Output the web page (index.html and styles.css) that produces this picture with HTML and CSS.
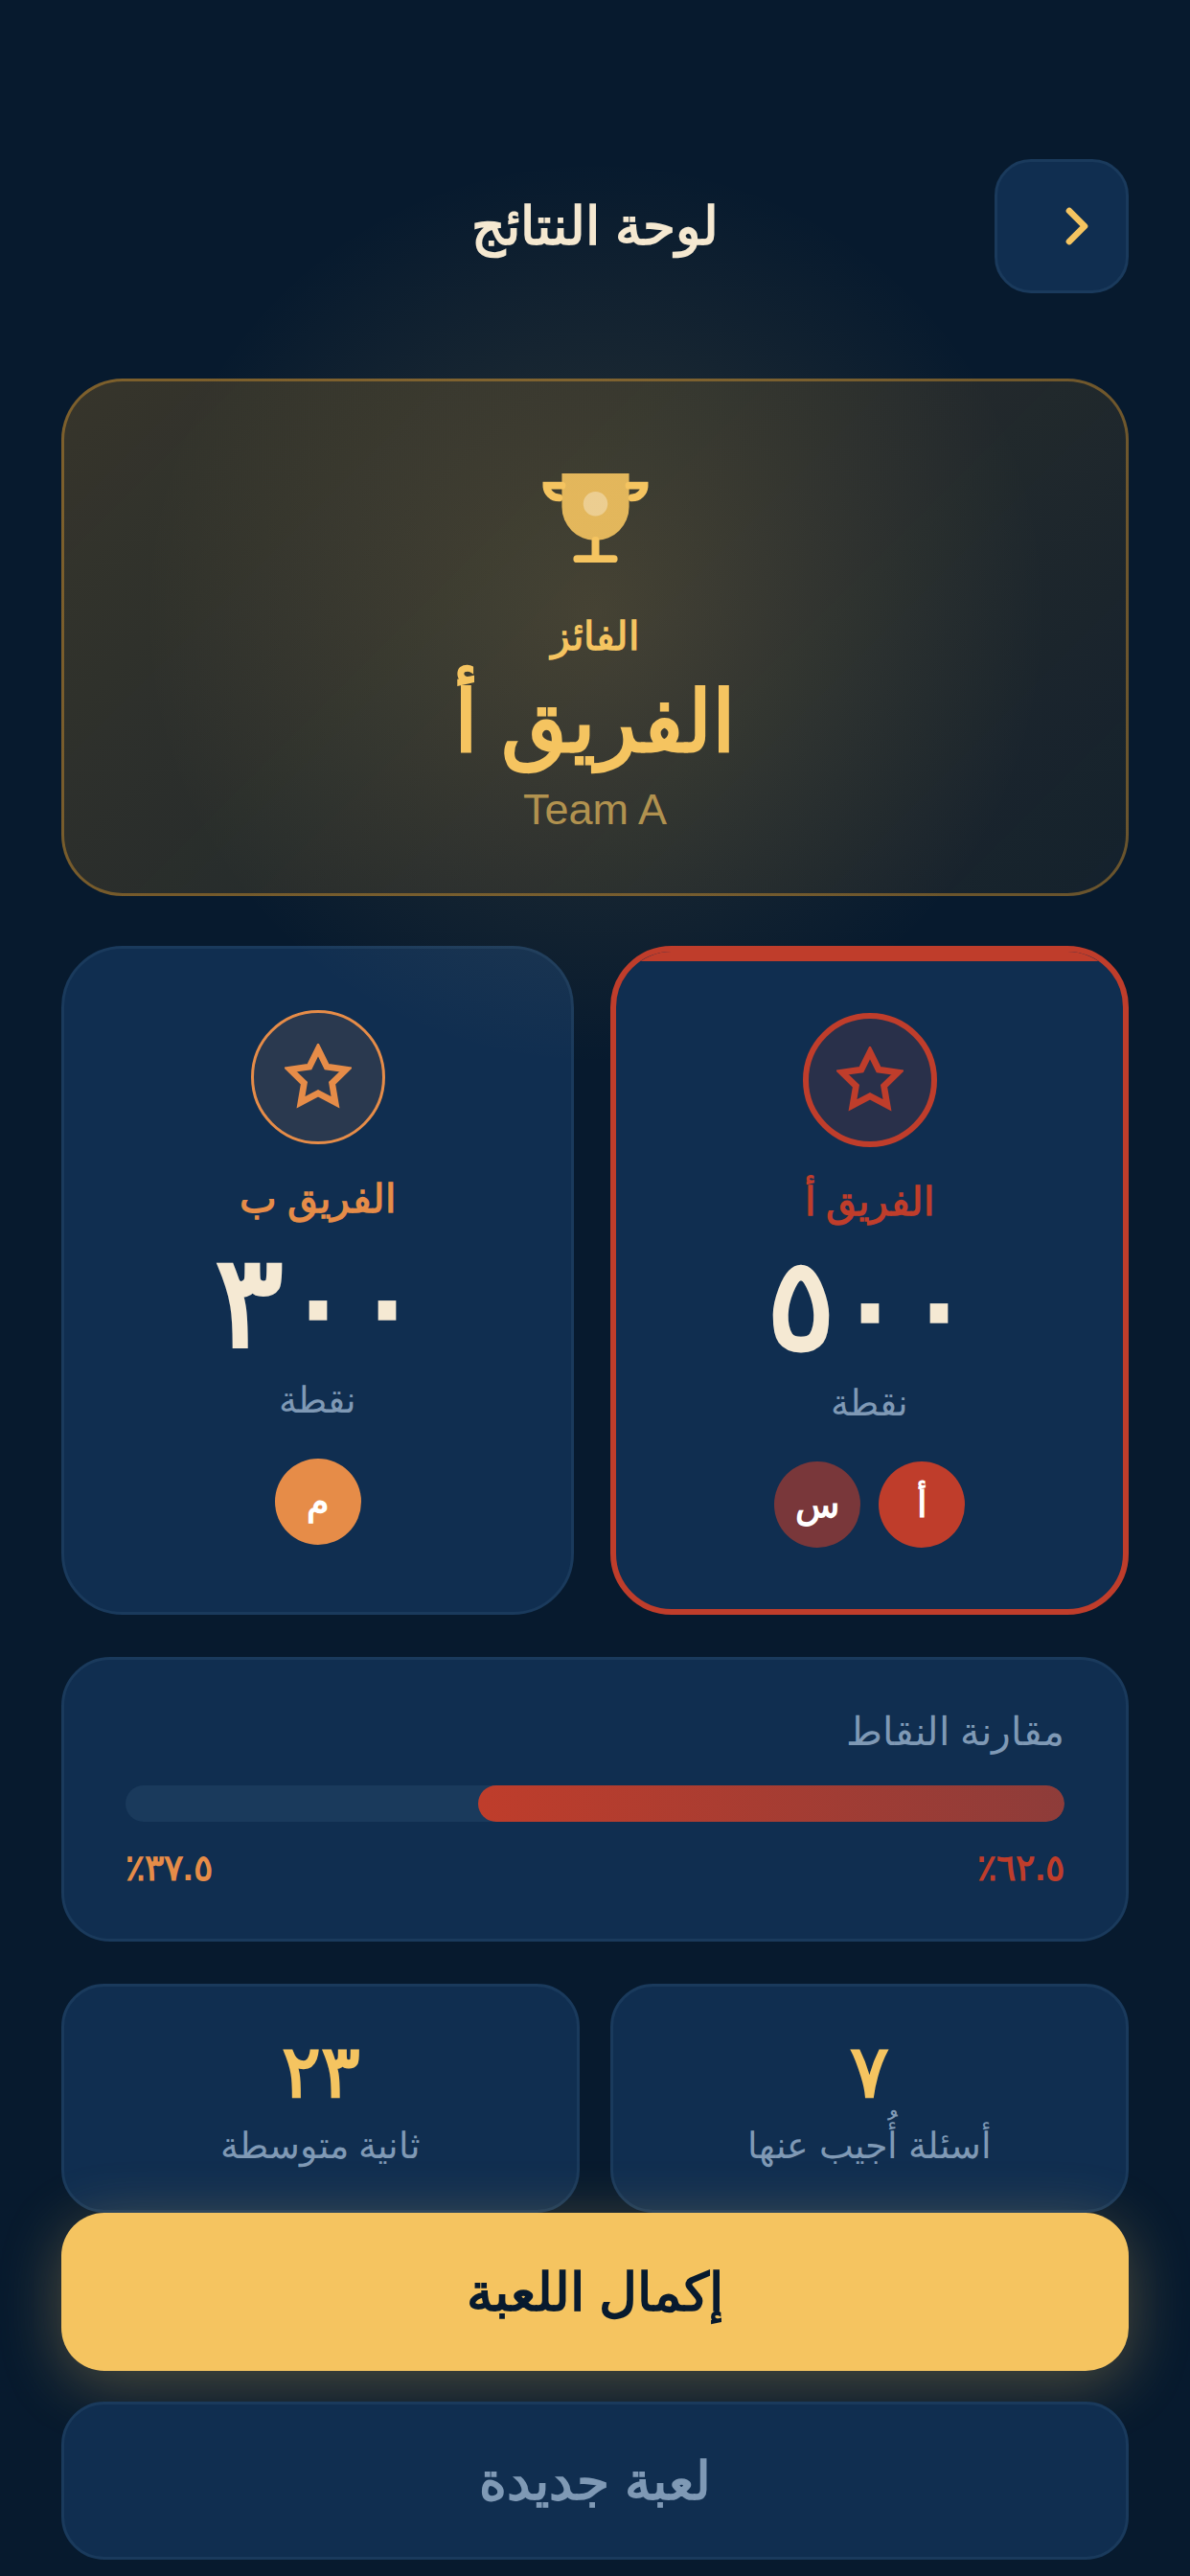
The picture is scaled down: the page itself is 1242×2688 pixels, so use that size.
FILE: index.html
```html
<!DOCTYPE html>
<html lang="ar" dir="rtl">
<head>
    <meta charset="UTF-8">
    <meta name="viewport" content="width=device-width, initial-scale=1.0">
    <title>لوحة النتائج</title>
    <link rel="stylesheet" href="styles.css">
</head>
<body>
    <div class="glow"></div>

    <header class="header">
        <button type="button" class="back-btn" aria-label="رجوع">
            <svg viewBox="0 0 24 24" fill="none" stroke="currentColor" stroke-width="2.5" stroke-linecap="round" stroke-linejoin="round">
                <path d="M15 6l6 6-6 6"/>
            </svg>
        </button>
        <h1>لوحة النتائج</h1>
    </header>

    <main>
        <section class="winner-card">
            <svg class="trophy" viewBox="0 0 48 48" fill="none" stroke="#f5c460" stroke-width="2.5" stroke-linecap="round">
                <path d="M13 10h22v11a11 11 0 0 1-22 0z" fill="#f5c460" stroke="none" opacity="0.9"/>
                <path d="M13 14H8a4 4 0 0 0 4 4"/>
                <path d="M35 14h5a4 4 0 0 1-4 4"/>
                <path d="M24 32v6M18 38h12"/>
                <circle cx="24" cy="20" r="4" fill="#f5e9d3" stroke="none" opacity="0.5"/>
            </svg>
            <p class="winner-label">الفائز</p>
            <h2 class="winner-name">الفريق أ</h2>
            <p class="winner-sub" lang="en">Team A</p>
        </section>

        <section class="teams">
            <article class="team team-a leading">
                <div class="team-icon">
                    <svg viewBox="0 0 24 24" fill="none" stroke="currentColor" stroke-width="2.3">
                        <path d="M12 2l3.09 6.26L22 9.27l-5 4.87 1.18 6.88L12 17.77l-6.18 3.25L7 14.14 2 9.27l6.91-1.01z"/>
                    </svg>
                </div>
                <h3>الفريق أ</h3>
                <p class="score">٥٠٠</p>
                <p class="points">نقطة</p>
                <div class="players">
                    <span class="player">أ</span>
                    <span class="player faded">س</span>
                </div>
            </article>

            <article class="team team-b">
                <div class="team-icon">
                    <svg viewBox="0 0 24 24" fill="none" stroke="currentColor" stroke-width="2.3">
                        <path d="M12 2l3.09 6.26L22 9.27l-5 4.87 1.18 6.88L12 17.77l-6.18 3.25L7 14.14 2 9.27l6.91-1.01z"/>
                    </svg>
                </div>
                <h3>الفريق ب</h3>
                <p class="score">٣٠٠</p>
                <p class="points">نقطة</p>
                <div class="players">
                    <span class="player">م</span>
                </div>
            </article>
        </section>

        <section class="compare">
            <h3>مقارنة النقاط</h3>
            <div class="bar">
                <div class="bar-fill" style="width: 62.5%"></div>
            </div>
            <div class="percents">
                <span class="percent-a">٦٢.٥٪</span>
                <span class="percent-b">٣٧.٥٪</span>
            </div>
        </section>

        <section class="stats">
            <div class="stat">
                <p class="stat-value">٧</p>
                <p class="stat-label">أسئلة أُجيب عنها</p>
            </div>
            <div class="stat">
                <p class="stat-value">٢٣</p>
                <p class="stat-label">ثانية متوسطة</p>
            </div>
        </section>
    </main>

    <footer class="actions">
        <button type="button" class="btn btn-primary">إكمال اللعبة</button>
        <button type="button" class="btn btn-secondary">لعبة جديدة</button>
    </footer>
</body>
</html>
```
FILE: styles.css
```css
:root {
    --bg: #071a2e;
    --card: #102e50;
    --line: #1a3a5c;
    --gold: #f5c460;
    --cream: #f5e9d3;
    --muted: #7f99b5;
    --red: #bf3d2b;
    --orange: #e68c48;
}

* {
    box-sizing: border-box;
    margin: 0;
    padding: 0;
}

body {
    position: relative;
    min-height: 100vh;
    padding: 166px 64px 16px;
    background-color: var(--bg);
    color: var(--cream);
    font-family: "Liberation Sans", sans-serif;
}

button {
    font-family: inherit;
    cursor: pointer;
}

/* soft light behind the winner */
.glow {
    position: absolute;
    top: 162px;
    left: 50%;
    width: 955px;
    height: 955px;
    margin-left: -477px;
    background: radial-gradient(circle, rgba(245, 196, 96, 0.15) 0%, transparent 70%);
    pointer-events: none;
}

.header {
    display: grid;
    grid-template-columns: 140px 1fr 140px;
    align-items: center;
    margin-bottom: 89px;
}

.header h1 {
    font-size: 55px;
    line-height: 68px;
    text-align: center;
}

.back-btn {
    display: flex;
    align-items: center;
    justify-content: center;
    height: 140px;
    background: var(--card);
    color: var(--gold);
    border: 3px solid var(--line);
    border-radius: 38px;
}

.back-btn svg {
    width: 64px;
    height: 64px;
}

/* winner */
.winner-card {
    display: flex;
    flex-direction: column;
    align-items: center;
    padding: 64px;
    margin-bottom: 52px;
    background: linear-gradient(135deg, rgba(235, 156, 34, 0.21), rgba(235, 156, 34, 0.06)) border-box;
    border: 3px solid rgba(224, 155, 45, 0.42);
    border-radius: 64px;
    color: var(--gold);
}

.trophy {
    width: 153px;
    height: 153px;
    margin-bottom: 22px;
}

.winner-label {
    font-size: 41px;
    line-height: 54px;
    font-weight: bold;
    margin-bottom: 5px;
}

.winner-name {
    font-size: 89px;
    line-height: 115px;
    margin-bottom: 11px;
}

.winner-sub {
    font-size: 45px;
    line-height: 46px;
    opacity: 0.65;
}

/* teams */
.teams {
    display: flex;
    gap: 38px;
    margin-bottom: 44px;
}

.team {
    flex: 1;
    display: flex;
    flex-direction: column;
    align-items: center;
    padding: 64px 38px;
    background: var(--card);
    border: 3px solid var(--line);
    border-radius: 64px;
}

.team-a {
    --team: var(--red);
    --team-soft: rgba(191, 61, 43, 0.15);
}

.team-b {
    --team: var(--orange);
    --team-soft: rgba(230, 140, 72, 0.12);
}

.leading {
    position: relative;
    overflow: hidden;
    border: 6px solid var(--team);
}

.leading::before {
    content: "";
    position: absolute;
    top: 0;
    left: 0;
    right: 0;
    height: 10px;
    background: var(--team);
}

.team-icon {
    display: flex;
    align-items: center;
    justify-content: center;
    width: 140px;
    height: 140px;
    margin-bottom: 30px;
    border: 3px solid var(--team);
    border-radius: 50%;
    background: var(--team-soft);
    color: var(--team);
}

.leading .team-icon {
    border-width: 6px;
}

.team-icon svg {
    width: 70px;
    height: 70px;
}

.team h3 {
    font-size: 41px;
    line-height: 54px;
    color: var(--team);
    margin-bottom: 20px;
}

.score {
    font-size: 134px;
    line-height: 121px;
    font-weight: bold;
    margin-bottom: 19px;
}

.points {
    font-size: 38px;
    line-height: 46px;
    color: var(--muted);
    margin-bottom: 38px;
}

.players {
    display: flex;
    gap: 19px;
}

.player {
    width: 90px;
    height: 90px;
    border-radius: 50%;
    background: var(--team);
    color: #fff;
    font-size: 38px;
    line-height: 90px;
    font-weight: bold;
    text-align: center;
}

.player.faded {
    background: rgba(191, 61, 43, 0.6);
}

/* comparison */
.compare {
    padding: 51px 64px;
    margin-bottom: 44px;
    background: var(--card);
    border: 3px solid var(--line);
    border-radius: 51px;
}

.compare h3 {
    font-size: 41px;
    line-height: 48px;
    font-weight: normal;
    color: var(--muted);
    margin-bottom: 32px;
}

.bar {
    height: 38px;
    margin-bottom: 25px;
    background: var(--line);
    border-radius: 19px;
    overflow: hidden;
}

.bar-fill {
    height: 100%;
    border-radius: 19px;
    background: linear-gradient(90deg, var(--red), rgba(191, 61, 43, 0.7));
}

.percents {
    display: flex;
    justify-content: space-between;
    font-size: 38px;
    line-height: 46px;
    font-weight: bold;
}

.percent-a {
    color: var(--red);
}

.percent-b {
    color: var(--orange);
}

/* stats */
.stats {
    display: flex;
    gap: 32px;
}

.stat {
    flex: 1;
    padding: 44px 32px;
    background: var(--card);
    border: 3px solid var(--line);
    border-radius: 45px;
    text-align: center;
}

.stat-value {
    font-size: 76px;
    line-height: 90px;
    font-weight: bold;
    color: var(--gold);
    margin-bottom: 9px;
}

.stat-label {
    font-size: 38px;
    line-height: 46px;
    color: var(--muted);
}

/* buttons */
.actions {
    display: flex;
    flex-direction: column;
    gap: 32px;
}

.btn {
    height: 165px;
    border: none;
    border-radius: 45px;
    font-size: 55px;
    font-weight: bold;
}

.btn-primary {
    background: var(--gold);
    color: var(--bg);
    box-shadow: 0 13px 64px rgba(245, 196, 96, 0.3);
}

.btn-secondary {
    background: var(--card);
    color: var(--muted);
    border: 3px solid var(--line);
}
```
